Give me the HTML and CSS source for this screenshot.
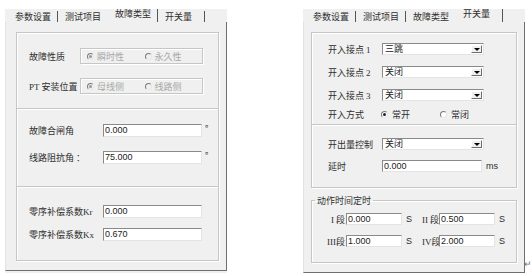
FILE: index.html
```html
<!DOCTYPE html>
<html lang="zh">
<head>
    <meta charset="UTF-8">
    <title>开关量设置</title>
    <link rel="stylesheet" href="styles.css">
</head>
<body>
    <div class="panel">
        <div class="tabs">
            <span class="tab">参数设置</span>
            <span class="tab pre">测试项目</span>
            <span class="tab active">故障类型</span>
            <span class="tab last">开关量</span>
        </div>
        <div class="page">
            <div class="group g-kind">
                <div class="row">
                    <span class="lbl">故障性质</span>
                    <div class="optbox off">
                        <span class="opt"><i class="radio on"></i>瞬时性</span>
                        <span class="opt"><i class="radio"></i>永久性</span>
                    </div>
                </div>
                <div class="row">
                    <span class="lbl"><em>PT</em> 安装位置</span>
                    <div class="optbox off">
                        <span class="opt"><i class="radio on"></i>母线侧</span>
                        <span class="opt"><i class="radio"></i>线路侧</span>
                    </div>
                </div>
            </div>
            <div class="group g-angle">
                <div class="row">
                    <span class="lbl">故障合闸角</span>
                    <span class="input">0.000</span>
                    <span class="deg">°</span>
                </div>
                <div class="row">
                    <span class="lbl">线路阻抗角 ：</span>
                    <span class="input">75.000</span>
                    <span class="deg">°</span>
                </div>
            </div>
            <div class="group g-comp">
                <div class="row">
                    <span class="lbl">零序补偿系数<em>Kr</em></span>
                    <span class="input">0.000</span>
                </div>
                <div class="row">
                    <span class="lbl">零序补偿系数<em>Kx</em></span>
                    <span class="input">0.670</span>
                </div>
            </div>
        </div>
    </div>

    <div class="panel">
        <div class="tabs">
            <span class="tab">参数设置</span>
            <span class="tab">测试项目</span>
            <span class="tab pre">故障类型</span>
            <span class="tab active last">开关量</span>
        </div>
        <div class="page">
            <div class="group g-in">
                <div class="row">
                    <span class="lbl">开入接点 <em>1</em></span>
                    <span class="select">三跳<b class="drop"></b></span>
                </div>
                <div class="row">
                    <span class="lbl">开入接点 <em>2</em></span>
                    <span class="select">关闭<b class="drop"></b></span>
                </div>
                <div class="row">
                    <span class="lbl">开入接点 <em>3</em></span>
                    <span class="select">关闭<b class="drop"></b></span>
                </div>
                <div class="row">
                    <span class="lbl">开入方式</span>
                    <span class="opt"><i class="radio on"></i>常开</span>
                    <span class="opt"><i class="radio"></i>常闭</span>
                </div>
            </div>
            <div class="group g-out">
                <div class="row">
                    <span class="lbl">开出量控制</span>
                    <span class="select">关闭<b class="drop"></b></span>
                </div>
                <div class="row">
                    <span class="lbl">延时</span>
                    <span class="input wide">0.000</span>
                    <span class="unit">ms</span>
                </div>
            </div>
            <fieldset class="timer">
                <legend>动作时间定时</legend>
                <div class="grid">
                    <span class="seg"><em>I</em> 段</span>
                    <span class="input">0.000</span>
                    <span class="unit">S</span>
                    <span class="seg"><em>II</em> 段</span>
                    <span class="input">0.500</span>
                    <span class="unit">S</span>
                    <span class="seg"><em>III</em>段</span>
                    <span class="input">1.000</span>
                    <span class="unit">S</span>
                    <span class="seg"><em>IV</em>段</span>
                    <span class="input">2.000</span>
                    <span class="unit">S</span>
                </div>
            </fieldset>
        </div>
    </div>
    <span class="ret">↵</span>
</body>
</html>
```

FILE: styles.css
```css
body {
    margin: 0;
    padding: 9px 0 0 5px;
    background-color: #fff;
    display: flex;
    gap: 76px;
    font-family: "Noto Sans CJK SC", sans-serif;
    font-size: 9px;
    color: #2e2e2e;
}

em {
    font-style: normal;
    font-family: "Liberation Serif", serif;
}

.panel {
    width: 222px;
    background-color: #f0f0f0;
}

/* tab strip */
.tabs {
    height: 13px;
    padding-left: 3px;
    display: flex;
    align-items: flex-end;
}

.tab {
    height: 11px;
    line-height: 11px;
    padding: 0 6px 0 7px;
    border-right: 1px solid #555;
    white-space: nowrap;
}

.tab.pre {
    border-right-color: transparent;
}

.tab.active {
    padding-bottom: 2px;
    line-height: 9px;
}

.tab.last {
    padding-right: 12px;
}

.page {
    box-sizing: border-box;
    width: 222px;
    padding: 10px 7px 9px 10px;
    border-right: 1px solid #6e6e6e;
    border-bottom: 1px solid #6e6e6e;
    border-left: 1px solid #e2e2e2;
}

.panel:last-of-type .page {
    padding-left: 7px;
}

/* etched group boxes */
.group {
    border: 1px solid #c6c6c6;
    box-shadow: inset 1px 1px 0 #fff, 1px 1px 0 #fff;
    display: flex;
    flex-direction: column;
    padding-left: 12px;
}

.group + .group {
    margin-top: -1px;
}

.row {
    display: flex;
    align-items: center;
    height: 13px;
}

.lbl {
    flex-shrink: 0;
    white-space: nowrap;
}

.g-kind { gap: 14px; padding-top: 15px; padding-bottom: 14px; }
.g-kind .row { height: 16px; }
.g-kind .lbl { width: 51px; }

.g-angle { gap: 14px; padding-top: 15px; padding-bottom: 22px; }
.g-comp { gap: 10px; padding-top: 18px; padding-bottom: 19px; }
.g-angle .lbl,
.g-comp .lbl { width: 74px; }

.optbox {
    box-sizing: border-box;
    width: 123px;
    height: 16px;
    border: 1px solid #c6c6c6;
    box-shadow: inset 1px 1px 0 #fff, 1px 1px 0 #fff;
    display: flex;
    align-items: center;
    padding-left: 6px;
}

.optbox .opt { width: 58px; }

.off { color: #a8a8a8; }

.opt {
    display: flex;
    align-items: center;
    gap: 3px;
    white-space: nowrap;
}

.radio {
    box-sizing: border-box;
    width: 7px;
    height: 7px;
    border-radius: 50%;
    border: 1px solid;
    border-color: #7a7a7a #e8e8e8 #e8e8e8 #7a7a7a;
    background-color: #fff;
    display: flex;
    align-items: center;
    justify-content: center;
}

.radio.on::after {
    content: "";
    width: 3px;
    height: 3px;
    border-radius: 50%;
    background-color: #222;
}

.off .radio { background-color: #f0f0f0; }
.off .radio.on::after { background-color: #999; }

.input {
    box-sizing: border-box;
    width: 99px;
    height: 13px;
    line-height: 11px;
    padding-left: 1px;
    background-color: #fff;
    border: 1px solid;
    border-color: #8a8a8a #e4e4e4 #e4e4e4 #8a8a8a;
    font-family: "Liberation Sans", sans-serif;
    font-size: 9px;
    color: #222;
}

.deg {
    align-self: flex-start;
    margin: -2px 0 0 3px;
    font-size: 9px;
}

/* right page */
.g-in { gap: 11px; padding: 10px 0 4px 16px; }
.g-in .row { height: 12px; }
.g-in .row:last-child { margin-top: -4px; }
.g-in .lbl,
.g-out .lbl { width: 54px; }
.g-in .opt { margin-right: 31px; margin-left: -1px; gap: 4px; }

.g-out { gap: 10px; padding: 13px 0 15px 16px; }
.g-out .row { height: 12px; }

.select {
    box-sizing: border-box;
    width: 102px;
    height: 12px;
    line-height: 10px;
    padding-left: 2px;
    background-color: #fff;
    border: 1px solid;
    border-color: #8a8a8a #e4e4e4 #e4e4e4 #8a8a8a;
    display: flex;
    justify-content: space-between;
    color: #222;
}

.drop {
    width: 11px;
    height: 8px;
    margin: 1px 1px 0 0;
    background-color: #f0f0f0;
    border: 1px solid;
    border-color: #fff #6e6e6e #6e6e6e #fff;
    box-sizing: border-box;
    display: flex;
    flex-direction: column;
    align-items: center;
    justify-content: center;
}

.drop::before {
    content: "";
    border-left: 3px solid transparent;
    border-right: 3px solid transparent;
    border-top: 3px solid #000;
}

.input.wide {
    width: 100px;
    height: 12px;
    line-height: 10px;
}

.unit {
    padding-left: 4px;
    font-family: "Liberation Sans", sans-serif;
    font-size: 9px;
}

.timer {
    margin: 6px 0 0 0;
    padding: 0 0 15px 0;
    border: 1px solid #c6c6c6;
    box-shadow: inset 1px 1px 0 #fff, 1px 1px 0 #fff;
    min-width: 0;
}

.timer legend {
    margin-left: 3px;
    padding: 0 2px;
    line-height: 13px;
}

.grid {
    margin-top: 6px;
    display: grid;
    grid-template-columns: 34px 56px 20px 17px 56px 20px;
    grid-auto-rows: 12px;
    row-gap: 10px;
    align-items: center;
}

.grid .input {
    width: 56px;
    height: 12px;
    line-height: 10px;
}

.seg {
    text-align: right;
    padding-right: 1px;
    white-space: nowrap;
}

.ret {
    align-self: flex-end;
    margin: 0 0 3px -77px;
    color: #777;
    font-size: 9px;
}
```
